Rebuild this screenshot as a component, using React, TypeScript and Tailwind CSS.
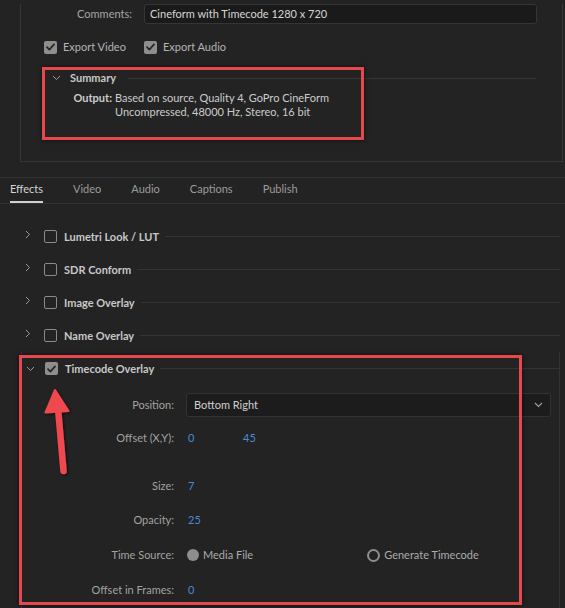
import React from 'react'

const font = { fontFamily: 'Lato, "Open Sans", sans-serif' }

function Check({ checked }: { checked?: boolean }) {
  if (checked) {
    return (
      <div className="w-[13px] h-[13px] rounded-[2px] bg-[#8e8e8e] flex items-center justify-center shrink-0">
        <svg width="9" height="8" viewBox="0 0 9 8">
          <path d="M1 4.2 L3.4 6.6 L8 1.4" stroke="#262626" strokeWidth="1.7" fill="none" strokeLinecap="round" strokeLinejoin="round" />
        </svg>
      </div>
    )
  }
  return <div className="w-[13px] h-[13px] rounded-[2px] border-[1.5px] border-[#8a8a8a] shrink-0" />
}

function Chevron({ open }: { open?: boolean }) {
  return open ? (
    <svg width="9" height="6" viewBox="0 0 9 6" className="shrink-0">
      <path d="M1 1 L4.5 4.5 L8 1" stroke="#9a9a9a" strokeWidth="1" fill="none" />
    </svg>
  ) : (
    <svg width="6" height="9" viewBox="0 0 6 9" className="shrink-0 -mt-[4px]">
      <path d="M1 1 L4.5 4.5 L1 8" stroke="#9a9a9a" strokeWidth="1" fill="none" />
    </svg>
  )
}

function EffectRow({ label, checked, open }: { label: string; checked?: boolean; open?: boolean }) {
  return (
    <div className="flex items-center h-[33px]">
      <div className="w-[17px] ml-[25px] flex justify-start">
        <Chevron open={open} />
      </div>
      <div className="ml-[2px]">
        <Check checked={checked} />
      </div>
      <span className="ml-[7px] font-bold text-[#c8c8c8] whitespace-nowrap">{label}</span>
      <div className="flex-1 ml-[6px] mr-[5px] h-px bg-[#343434]" />
    </div>
  )
}

function Field({ label, children, className }: { label: string; children: React.ReactNode; className?: string }) {
  return (
    <div className={`flex items-center ${className ?? ''}`}>
      <span className="w-[173px] text-right text-[#a2a2a2] whitespace-nowrap">{label}</span>
      <div className="ml-[14px] flex items-center flex-1">{children}</div>
    </div>
  )
}

export default function App() {
  return (
    <div className="relative w-[565px] h-[608px] overflow-hidden bg-[#232323] text-[11px] leading-[14px]" style={font}>
      {/* export settings panel */}
      <div className="ml-[20px] mr-[2px] h-[158px] border-x border-b border-[#363636]">
        <div className="flex items-center h-[20px] mt-[4px]">
          <span className="w-[111px] text-right text-[#a6a6a6]">Comments:</span>
          <div className="ml-[12px] w-[393px] h-[20px] bg-[#1a1a1a] border border-[#353535] rounded-[3px] px-[5px] flex items-center text-[#d6d6d6]">
            Cineform with Timecode 1280 x 720
          </div>
        </div>

        <div className="flex items-center h-[14px] mt-[16px] pl-[23px]">
          <Check checked />
          <span className="ml-[6px] text-[#b4b4b4]">Export Video</span>
          <div className="ml-[18px]">
            <Check checked />
          </div>
          <span className="ml-[6px] text-[#b4b4b4]">Export Audio</span>
        </div>

        <div className="flex items-center h-[14px] mt-[17px] pl-[31px]">
          <Chevron open />
          <span className="ml-[9px] font-bold text-[#c8c8c8]">Summary</span>
          <div className="flex-1 ml-[12px] mr-[26px] h-px bg-[#363636]" />
        </div>

        <div className="flex mt-[6px] text-[#cccccc]">
          <span className="w-[91px] text-right font-bold">Output:</span>
          <div className="ml-[3px]">
            <div>Based on source, Quality 4, GoPro CineForm</div>
            <div>Uncompressed, 48000 Hz, Stereo, 16 bit</div>
          </div>
        </div>
      </div>

      {/* tabs */}
      <div className="mt-[15px] border-t border-[#333]">
        <div className="flex items-end h-[26px] pl-[10px] gap-[30px] border-b border-[#333] text-[#9c9c9c]">
          {['Effects', 'Video', 'Audio', 'Captions', 'Publish'].map((t, i) => (
            <div key={t} className="flex flex-col">
              <span className={i === 0 ? 'text-[#d4d4d4]' : ''}>{t}</span>
              <div className={`h-[2px] mt-[5px] ${i === 0 ? 'bg-[#d0d0d0]' : 'bg-transparent'}`} />
            </div>
          ))}
        </div>
      </div>

      {/* effects */}
      <div className="mt-[16px]">
        <EffectRow label="Lumetri Look / LUT" />
        <EffectRow label="SDR Conform" />
        <EffectRow label="Image Overlay" />
        <EffectRow label="Name Overlay" />
        <div className="ml-[21px] mr-[5px] border-x border-[#333] h-[300px]">
          <div className="-ml-[21px] -mr-[6px]">
            <EffectRow label="Timecode Overlay" checked open />
          </div>
          <div className="-ml-[21px]">
            <Field label="Position:" className="mt-[8px]">
              <div className="-ml-[2px] w-[365px] h-[24px] bg-[#1c1c1c] border border-[#333] rounded-[3px] flex items-center px-[7px] text-[#d0d0d0]">
                <span className="flex-1">Bottom Right</span>
                <svg width="9" height="6" viewBox="0 0 9 6">
                  <path d="M1 1 L4.5 4.5 L8 1" stroke="#a0a0a0" strokeWidth="1.1" fill="none" />
                </svg>
              </div>
            </Field>
            <Field label="Offset (X,Y):" className="h-[20px] mt-[11px]">
              <span className="text-[#4a8ad6] w-[55px]">0</span>
              <span className="text-[#4a8ad6]">45</span>
            </Field>
            <Field label="Size:" className="h-[20px] mt-[28px]">
              <span className="text-[#4a8ad6]">7</span>
            </Field>
            <Field label="Opacity:" className="h-[20px] mt-[14px]">
              <span className="text-[#4a8ad6]">25</span>
            </Field>
            <Field label="Time Source:" className="h-[20px] mt-[15px]">
              <div className="-ml-[1px] w-[12px] h-[12px] rounded-full bg-[#8e8e8e]" />
              <span className="ml-[4px] text-[#ababab]">Media File</span>
              <div className="ml-[114px] w-[13px] h-[13px] rounded-full border-2 border-[#8e8e8e]" />
              <span className="ml-[4px] text-[#ababab]">Generate Timecode</span>
            </Field>
            <Field label="Offset in Frames:" className="h-[20px] mt-[15px]">
              <span className="text-[#4a8ad6]">0</span>
            </Field>
          </div>
        </div>
      </div>

      {/* annotations */}
      <div className="absolute left-[42px] top-[67px] w-[322px] h-[73px] border-[3px] border-[#e5484d] shadow-[0_0_4px_rgba(0,0,0,0.7)]" />
      <div className="absolute left-[19px] top-[355px] w-[503px] h-[250px] border-[3px] border-[#e5484d] shadow-[0_0_4px_rgba(0,0,0,0.7)]" />
      <svg className="absolute left-[40px] top-[385px]" width="40" height="95" viewBox="40 385 40 95">
        <defs>
          <filter id="sh" x="-50%" y="-50%" width="200%" height="200%">
            <feDropShadow dx="1" dy="1" stdDeviation="1.5" floodColor="#000" floodOpacity="0.7" />
          </filter>
        </defs>
        <g filter="url(#sh)" fill="#ef4a50" stroke="#ef4a50">
          <path d="M63.5 471 L58 408" strokeWidth="6.5" strokeLinecap="round" fill="none" />
          <path d="M55 390 L68.5 411 L45.5 412.5 Z" strokeWidth="2" strokeLinejoin="round" />
        </g>
      </svg>
    </div>
  )
}
